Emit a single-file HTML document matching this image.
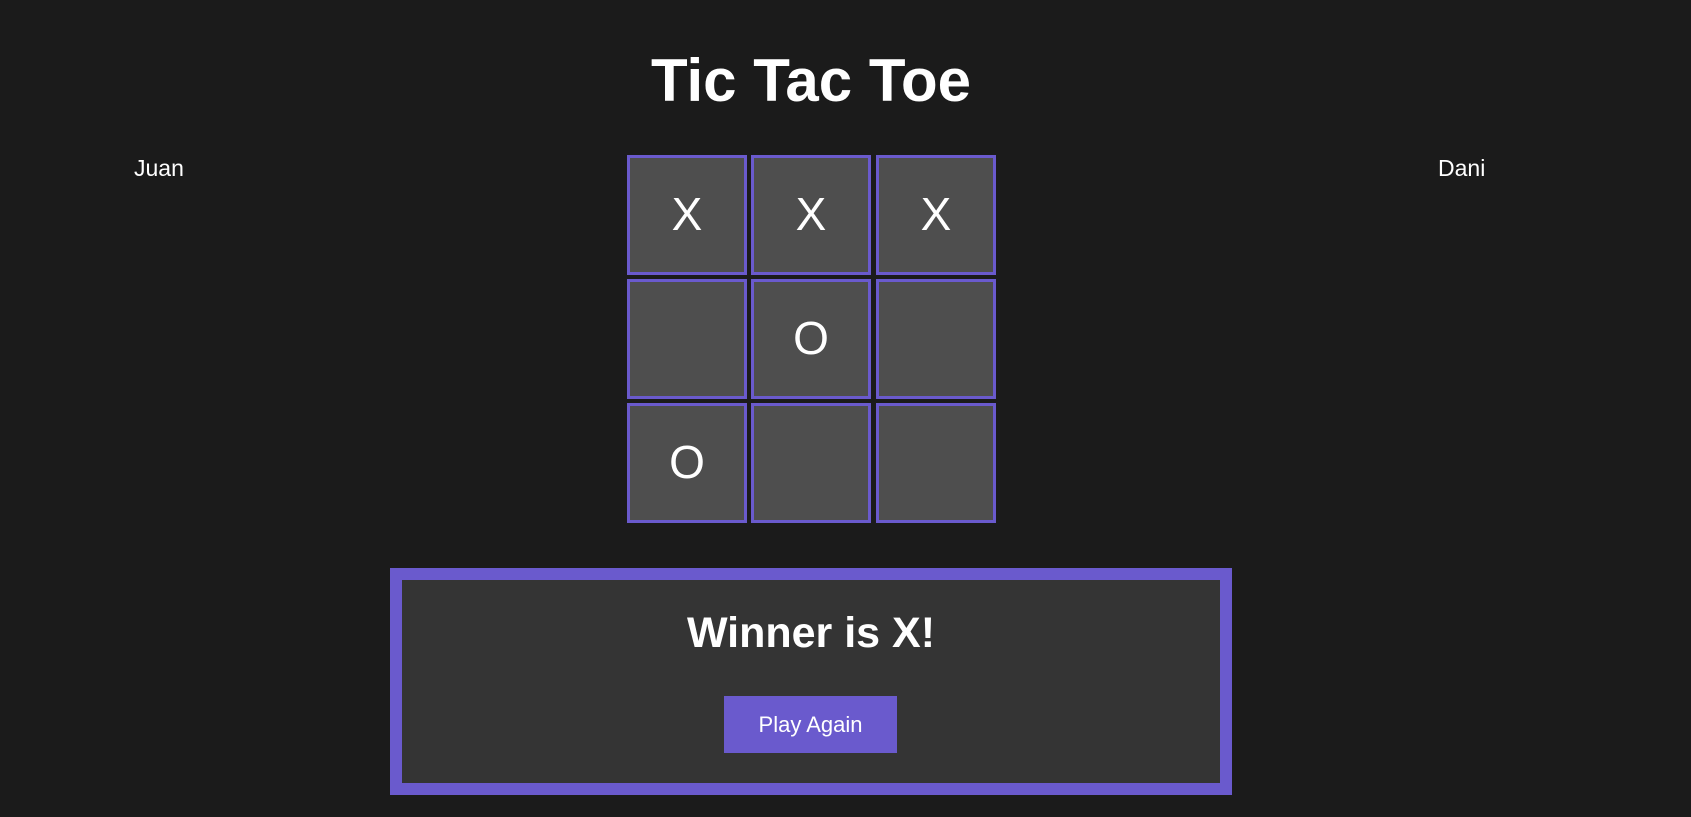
<!DOCTYPE html>
<html><head><style>
body{margin:0;width:1691px;height:817px;background:#1b1b1b;font-family:"Liberation Sans",Arial,sans-serif;color:#fff;position:relative;overflow:hidden}
h1{position:absolute;left:0;width:1622px;top:46px;margin:0;text-align:center;font-size:60px;line-height:70px;font-weight:bold}
.name{position:absolute;top:155px;font-size:23px}
.cell{position:absolute;width:114px;height:114px;border:3px solid #6a5acd;background:#4e4e4e;font-size:46px;line-height:112px;text-align:center}
.box{position:absolute;left:390px;top:568px;width:818px;height:203px;border:12px solid #6a5acd;background:#343434;text-align:center}
.box h2{margin:0;position:absolute;top:29px;width:100%;font-size:43px;font-weight:bold}
.btn{position:absolute;left:322px;top:116px;width:173px;height:57px;background:#6a5acd;font-size:22px;line-height:57px}
</style></head><body>
<h1>Tic Tac Toe</h1>
<div class="name" style="left:134px">Juan</div>
<div class="name" style="left:1438px">Dani</div>
<div class="cell" style="left:627px;top:155px">X</div>
<div class="cell" style="left:751px;top:155px">X</div>
<div class="cell" style="left:876px;top:155px">X</div>
<div class="cell" style="left:627px;top:279px"></div>
<div class="cell" style="left:751px;top:279px">O</div>
<div class="cell" style="left:876px;top:279px"></div>
<div class="cell" style="left:627px;top:403px">O</div>
<div class="cell" style="left:751px;top:403px"></div>
<div class="cell" style="left:876px;top:403px"></div>
<div class="box"><h2>Winner is X!</h2><div class="btn">Play Again</div></div>
</body></html>
